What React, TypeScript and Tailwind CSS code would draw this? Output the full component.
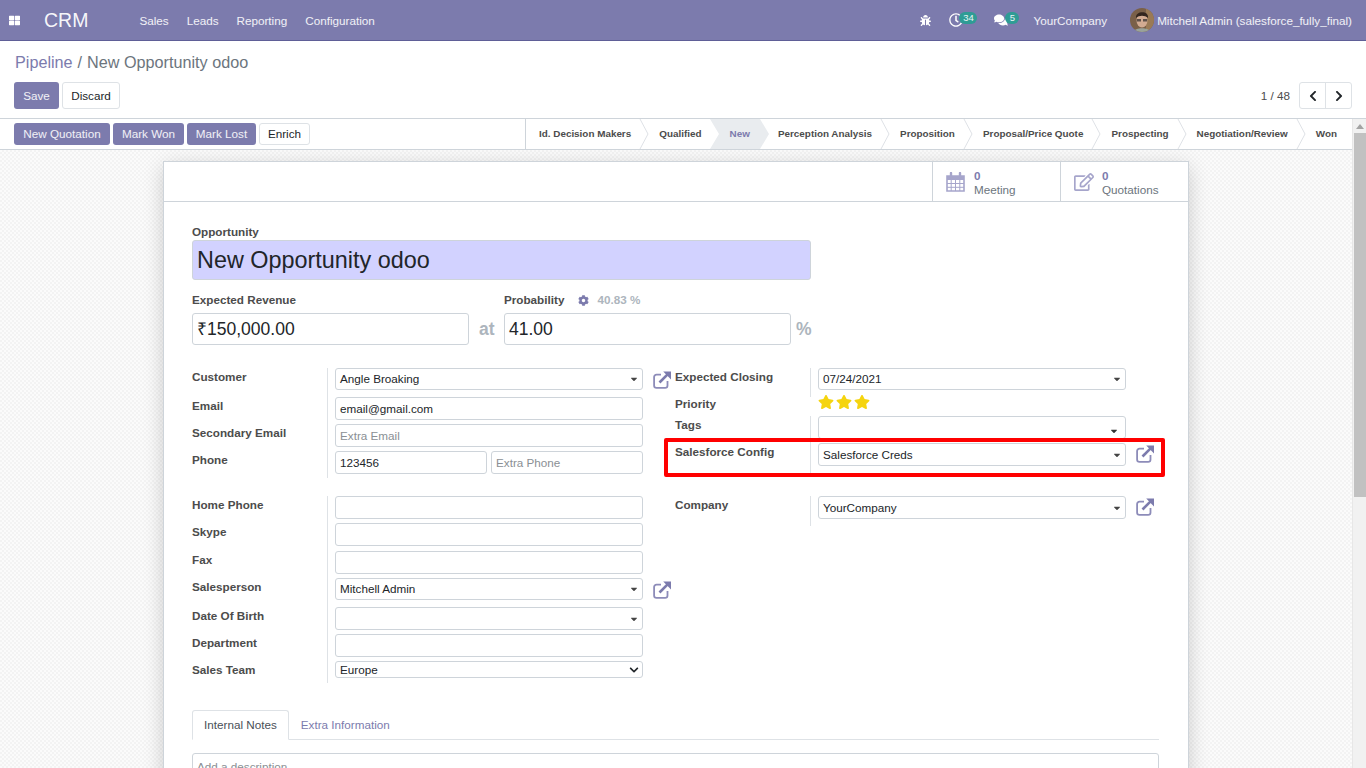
import type { ReactNode } from "react";
import { FaBug, FaCaretDown, FaChevronDown, FaChevronLeft, FaChevronRight, FaCog, FaComments, FaRegClock, FaRegEdit, FaStar, FaThLarge } from "react-icons/fa";

const stages = ["Id. Decision Makers", "Qualified", "New", "Perception Analysis", "Proposition", "Proposal/Price Quote", "Prospecting", "Negotiation/Review", "Won"];

function Field({ value, placeholder, select, className = "h-[23px] pt-px" }: { value?: string; placeholder?: string; select?: boolean; className?: string }) {
  return (
    <div className={`relative flex items-center rounded-[3px] border border-[#ced4da] bg-white px-[4px] text-[#212529] ${className}`}>
      {value ? <span>{value}</span> : <span className="text-[#8a8f94]">{placeholder}</span>}
      {select && <FaCaretDown className="absolute right-[3px] top-1/2 -translate-y-1/2 text-[10px] text-[#444]" />}
    </div>
  );
}

function Row({ label, children, h = "h-[27px]" }: { label: string; children: ReactNode; h?: string }) {
  return (
    <div className={`flex ${h}`}>
      <div className="w-[135px] shrink-0 font-bold text-[#4c4c4c]">{label}</div>
      <div className="w-[316px] border-l border-[#dee2e6] pl-[7px]">
        <div className="w-[308px]">{children}</div>
      </div>
    </div>
  );
}

// fa-external-link from the old icon font, react-icons only has the newer cut
function LinkIcon({ className = "" }: { className?: string }) {
  return (
    <svg viewBox="0 0 18 18" className={`h-[18px] w-[18px] ${className}`}>
      <path d="M8 3.7H3.5a2.4 2.4 0 0 0-2.4 2.4v8.4a2.4 2.4 0 0 0 2.4 2.4h8.6a2.4 2.4 0 0 0 2.4-2.4V10" fill="none" stroke="#8d8cb9" strokeWidth="1.8" />
      <path d="M6.5 11.5L14.6 3.4" fill="none" stroke="#7c7bad" strokeWidth="2.6" />
      <path d="M10.2 0.6H18V8.4z" fill="#7c7bad" />
    </svg>
  );
}

function CalendarIcon() {
  return (
    <svg viewBox="0 0 19 20" className="h-[20px] w-[19px] shrink-0">
      <path d="M1 4h17v15H1z" fill="none" stroke="#a6a5cb" strokeWidth="1.6" />
      <path d="M1 4h17v4H1z" fill="#a6a5cb" />
      <path d="M1 11.5h17M1 15.3h17M5.2 8v11M9.5 8v11M13.8 8v11" fill="none" stroke="#a6a5cb" />
      <path d="M5 1v4M14 1v4" fill="none" stroke="#a6a5cb" strokeWidth="2.4" strokeLinecap="round" />
    </svg>
  );
}

export default function App() {
  return (
    <div className="flex h-[768px] flex-col overflow-hidden bg-white font-['Liberation_Sans',Arial,sans-serif] text-[11.7px] text-[#4c4c4c]">
      <header className="flex h-[41px] shrink-0 items-center border-b border-[#5f5e97] bg-[#7c7bad] text-white/90">
        <FaThLarge className="ml-[9px] text-[11px] text-white" />
        <span className="ml-[24px] pt-[2px] text-[19.5px] text-white/95">CRM</span>
        <nav className="ml-[51px] flex gap-[18px] pt-[2px]">
          <span>Sales</span>
          <span>Leads</span>
          <span>Reporting</span>
          <span>Configuration</span>
        </nav>
        <div className="ml-auto flex items-center">
          <FaBug className="text-[11px] text-white" />
          <div className="relative ml-[18px] flex h-[14px] w-[27px] items-center">
            <FaRegClock className="text-[14px] text-white" />
            <span className="absolute -top-px left-[10px] h-[12px] w-[18px] rounded-full bg-[#2f9c95] text-center text-[9.5px] leading-[11px]">34</span>
          </div>
          <div className="relative ml-[18px] flex h-[14px] w-[24px] items-center">
            <FaComments className="text-[14px] text-white" />
            <span className="absolute -top-px left-[11px] h-[12px] w-[14px] rounded-full bg-[#2f9c95] text-center text-[9.5px] leading-[11px]">5</span>
          </div>
          <span className="ml-[15px] pt-[2px]">YourCompany</span>
          <svg viewBox="0 0 24 24" className="ml-[23px] h-[24px] w-[24px] rounded-full">
            <rect width="24" height="24" fill="#7a6048" />
            <rect x="16" width="8" height="24" fill="#9a7a55" />
            <ellipse cx="12" cy="12.5" rx="5.5" ry="7" fill="#d2ab92" />
            <path d="M6 10C5 3 19 2 18 10c-3-3-9-3-12 0z" fill="#33261e" />
            <path d="M6.8 11h4.2v2.6H6.8zM13 11h4.2v2.6H13z" fill="#5d5048" />
            <path d="M3 24c2-5 16-5 18 0z" fill="#9aa39a" />
          </svg>
          <span className="ml-[3px] mr-[14px] pt-[2px]">Mitchell Admin (salesforce_fully_final)</span>
        </div>
      </header>

      <div className="flex h-[78px] shrink-0 flex-col border-b border-[#ced4da] px-[14px]">
        <div className="ml-px mt-[11px] text-[16.2px] leading-[20px] text-[#6c757d]">
          <span className="text-[#7c7bad]">Pipeline</span>
          <span className="mx-[5px]">/</span>
          <span>New Opportunity odoo</span>
        </div>
        <div className="mt-[10px] flex items-center">
          <button className="h-[27px] w-[45px] rounded-[3px] bg-[#7c7bad] text-white/90">Save</button>
          <button className="ml-[3px] h-[27px] w-[58px] rounded-[3px] border border-[#dee2e6] bg-white text-[#212529]">Discard</button>
          <span className="ml-auto">1 / 48</span>
          <div className="ml-[9px] flex h-[27px] w-[53px] rounded-[3px] border border-[#dee2e6] text-[#212529]">
            <div className="flex flex-1 items-center justify-center border-r border-[#dee2e6]"><FaChevronLeft className="text-[12px]" /></div>
            <div className="flex flex-1 items-center justify-center"><FaChevronRight className="text-[12px]" /></div>
          </div>
        </div>
      </div>

      <div className="flex min-h-0 flex-1">
        <div className="flex min-w-0 flex-1 flex-col">
          <div className="flex h-[31px] shrink-0 items-center border-b border-[#ced4da] pl-[14px]">
            <div className="flex gap-[3px]">
              <button className="h-[22px] w-[96px] rounded-[3px] bg-[#7c7bad] text-white/90">New Quotation</button>
              <button className="h-[22px] w-[71px] rounded-[3px] bg-[#7c7bad] text-white/90">Mark Won</button>
              <button className="h-[22px] w-[69px] rounded-[3px] bg-[#7c7bad] text-white/90">Mark Lost</button>
              <button className="h-[22px] w-[51px] rounded-[3px] border border-[#dee2e6] bg-white text-[#212529]">Enrich</button>
            </div>
            <div className="ml-auto flex h-full w-[827px] shrink-0 border-l border-[#ced4da] pl-[13px] pr-[15px] text-[9.9px] font-bold">
              <div className="flex flex-1 items-center justify-between">
                {stages.map((s, i) => (
                  <div key={s} className="relative flex h-full items-center">
                    {s === "New" && (
                      <svg viewBox="0 0 59 30" className="absolute left-[-20px] top-0 h-[30px] w-[59px]">
                        <path d="M0 0H50L59 15 50 30H0L9 15z" fill="#e9ecef" />
                      </svg>
                    )}
                    <span className={`relative whitespace-nowrap ${s === "New" ? "text-[#7c7bad]" : "text-[#4c4c4c]"}`}>{s}</span>
                    {i < stages.length - 1 && s !== "New" && stages[i + 1] !== "New" && (
                      <svg viewBox="0 0 10 30" className="absolute left-full top-0 ml-[8px] h-[30px] w-[10px]">
                        <path d="M1 0l8 15-8 15" fill="none" stroke="#dee2e6" />
                      </svg>
                    )}
                  </div>
                ))}
              </div>
            </div>
          </div>

          <main className="min-h-0 flex-1 overflow-hidden bg-[#f8f8f8] bg-[repeating-conic-gradient(#f3f3f3_0%_25%,#fbfbfb_0%_50%)] bg-[length:4px_4px] pt-[11px]">
            <div className="relative ml-[163px] w-[1026px] border border-[#ced4da] bg-white pb-[40px] shadow-[0_5px_20px_-1px_rgba(0,0,0,0.2)]">
              <div className="flex h-[40px] justify-end border-b border-[#ced4da]">
                <div className="flex w-[128px] items-center border-l border-[#ced4da] pl-[13px]">
                  <CalendarIcon />
                  <div className="ml-[9px] pt-[2px] leading-[14px] text-[#6c757d]">
                    <div className="font-bold text-[#7c7bad]">0</div>
                    <div>Meeting</div>
                  </div>
                </div>
                <div className="flex w-[128px] items-center border-l border-[#ced4da] pl-[13px]">
                  <FaRegEdit className="text-[20px] text-[#a6a5cb]" />
                  <div className="ml-[8px] pt-[2px] leading-[14px] text-[#6c757d]">
                    <div className="font-bold text-[#7c7bad]">0</div>
                    <div>Quotations</div>
                  </div>
                </div>
              </div>

              <div className="pl-[28px] pr-[29px]">
                <div className="mt-[23px] font-bold leading-[14px]">Opportunity</div>
                <div className="mt-px flex h-[40px] w-[619px] items-center rounded-[3px] border border-[#ced4da] bg-[#d2d2ff] px-[4px] pt-[2px] text-[23.4px] text-[#212529]">New Opportunity odoo</div>

                <div className="mt-[13px] flex">
                  <div className="w-[277px]">
                    <div className="font-bold leading-[14px]">Expected Revenue</div>
                    <div className="mt-[6px] flex h-[32px] items-center rounded-[3px] border border-[#ced4da] px-[4px] text-[17.55px] text-[#212529]">₹150,000.00</div>
                  </div>
                  <div className="ml-[10px] flex w-[25px] items-end pb-[3px] text-[17.55px] font-bold text-[#adb5bd]">at</div>
                  <div className="w-[287px]">
                    <div className="flex items-center font-bold leading-[14px]">
                      Probability
                      <FaCog className="ml-[14px] text-[11px] text-[#7c7bad]" />
                      <span className="ml-[8px] text-[#adb5bd]">40.83 %</span>
                    </div>
                    <div className="mt-[6px] flex h-[32px] items-center rounded-[3px] border border-[#ced4da] px-[4px] text-[17.55px] text-[#212529]">41.00</div>
                  </div>
                  <div className="ml-[5px] flex items-end pb-[3px] text-[17.55px] font-bold text-[#adb5bd]">%</div>
                </div>

                <div className="mt-[23px] flex">
                  <div className="w-[483px]">
                    <div className="relative">
                      <Row label="Customer" h="h-[29px]"><Field value="Angle Broaking" select className="h-[22px]" /></Row>
                      <LinkIcon className="absolute left-[461px] top-[3px]" />
                      <Row label="Email"><Field value="email@gmail.com" /></Row>
                      <Row label="Secondary Email"><Field placeholder="Extra Email" /></Row>
                      <Row label="Phone">
                        <div className="flex gap-[4px]">
                          <Field value="123456" className="h-[23px] flex-1 pt-px" />
                          <Field placeholder="Extra Phone" className="h-[23px] flex-1 pt-px" />
                        </div>
                      </Row>
                    </div>
                    <div className="relative mt-[18px]">
                      <Row label="Home Phone"><Field /></Row>
                      <Row label="Skype" h="h-[28px]"><Field /></Row>
                      <Row label="Fax"><Field /></Row>
                      <Row label="Salesperson" h="h-[29px]"><Field value="Mitchell Admin" select className="h-[22px]" /></Row>
                      <LinkIcon className="absolute left-[461px] top-[85px]" />
                      <Row label="Date Of Birth"><Field select /></Row>
                      <Row label="Department"><Field /></Row>
                      <Row label="Sales Team" h="h-[22px]">
                        <div className="relative flex h-[17px] items-center rounded-[3px] border border-[#ced4da] px-[4px] text-[#212529]">
                          Europe
                          <FaChevronDown className="absolute right-[3px] text-[10px] text-[#212529]" />
                        </div>
                      </Row>
                    </div>
                  </div>

                  <div className="w-[483px]">
                    <Row label="Expected Closing" h="h-[29px]"><Field value="07/24/2021" select className="h-[22px]" /></Row>
                    <div className="flex h-[19px]">
                      <div className="-mt-[2px] w-[135px] font-bold">Priority</div>
                      <div className="flex gap-[2px] border-l border-white pl-[7px]">
                        <FaStar className="-mt-[3px] text-[16px] text-[#f5d40f]" />
                        <FaStar className="-mt-[3px] text-[16px] text-[#f5d40f]" />
                        <FaStar className="-mt-[3px] text-[16px] text-[#f5d40f]" />
                      </div>
                    </div>
                    <Row label="Tags">
                      <div className="relative h-[23px] rounded-[3px] border border-[#ced4da]">
                        <FaCaretDown className="absolute bottom-[2px] right-[6px] text-[10px] text-[#333]" />
                      </div>
                    </Row>
                    <div className="relative">
                      <div className="pointer-events-none absolute left-[-11px] top-[-5px] h-[39px] w-[501px] rounded-[2px] border-[4px] border-[#ff0000]" />
                      <Row label="Salesforce Config" h="h-[33px]"><Field value="Salesforce Creds" select /></Row>
                      <LinkIcon className="absolute left-[461px] top-[2px]" />
                    </div>
                    <div className="relative mt-[20px]">
                      <Row label="Company" h="h-[30px]"><Field value="YourCompany" select /></Row>
                      <LinkIcon className="absolute left-[461px] top-[2px]" />
                    </div>
                  </div>
                </div>

                <div className="mt-[27px] flex h-[30px] border-b border-[#dee2e6]">
                  <div className="flex h-[30px] items-center rounded-t-[3px] border border-[#dee2e6] border-b-white bg-white px-[11px] text-[#495057]">Internal Notes</div>
                  <div className="flex items-center px-[12px] pt-px text-[#7c7bad]">Extra Information</div>
                </div>
                <div className="mt-[13px] h-[60px] rounded-[3px] border border-[#ced4da] px-[4px] pt-[4px] text-[#8a8f94]">Add a description</div>
              </div>
            </div>
          </main>
        </div>

        <div className="flex w-[14px] shrink-0 flex-col items-center border-l border-[#e7e7e7] bg-[#f1f1f1]">
          <svg viewBox="0 0 10 6" className="mt-[5px] h-[5px] w-[8px]"><path d="M5 0l5 6H0z" fill="#a3a3a3" /></svg>
          <div className="mt-[4px] h-[364px] w-[12px] bg-[#c1c1c1]" />
        </div>
      </div>
    </div>
  );
}
